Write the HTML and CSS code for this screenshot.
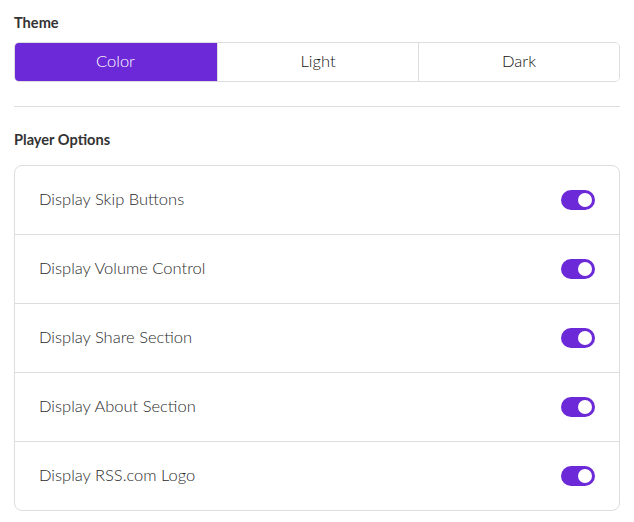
FILE: index.html
```html
<!DOCTYPE html>
<html>
<head>
<meta charset="utf-8">
<link rel="stylesheet" href="styles.css">
</head>
<body>
<div class="panel">
  <div class="section-label">Theme</div>
  <div class="segmented">
    <button class="seg active">Color</button>
    <button class="seg">Light</button>
    <button class="seg">Dark</button>
  </div>
  <hr class="divider">
  <div class="section-label">Player Options</div>
  <div class="options">
    <div class="option"><span class="label">Display Skip Buttons</span><span class="toggle"></span></div>
    <div class="option"><span class="label">Display Volume Control</span><span class="toggle"></span></div>
    <div class="option"><span class="label">Display Share Section</span><span class="toggle"></span></div>
    <div class="option"><span class="label">Display About Section</span><span class="toggle"></span></div>
    <div class="option"><span class="label">Display RSS.com Logo</span><span class="toggle"></span></div>
  </div>
</div>
</body>
</html>
```
FILE: styles.css
```css
* { box-sizing: border-box; }
body {
  margin: 0;
  background: #fff;
  font-family: Lato, "Open Sans", sans-serif;
  color: #444;
}
.panel {
  padding: 14px 14px 0 14px;
}
.section-label {
  font-size: 14.6px;
  font-weight: 700;
  color: #333;
  line-height: 18px;
}
.segmented {
  display: flex;
  margin-top: 10px;
  height: 40px;
  border: 1px solid #ddd;
  border-radius: 5px;
  overflow: hidden;
}
.seg {
  flex: 1;
  border: none;
  background: #fff;
  font-family: inherit;
  font-size: 16.5px;
  font-weight: 300;
  color: #111;
  padding: 0 0 3px 0;
  margin: 0;
}
.seg + .seg { border-left: 1px solid #ddd; }
.seg.active {
  background: #6c29d7;
  color: #fff;
  margin: -1px 0 -1px -1px;
  flex: 0 0 203px;
}
.divider {
  border: none;
  border-top: 1px solid #ddd;
  margin: 24px 0 24px 0;
}
.options {
  margin-top: 16px;
  border: 1px solid #ddd;
  border-radius: 8px;
}
.option {
  display: flex;
  align-items: center;
  justify-content: space-between;
  height: 69px;
  padding: 0 24px;
  font-size: 16.5px;
  font-weight: 300;
  color: #2b2b2b;
}
.label { padding-bottom: 3px; }
.option + .option { border-top: 1px solid #ddd; }
.option:first-child { height: 68px; }
.toggle {
  position: relative;
  width: 34px;
  height: 20px;
  border-radius: 10px;
  background: #6c29d7;
}
.toggle::after {
  content: "";
  position: absolute;
  right: 3px;
  top: 3px;
  width: 14px;
  height: 14px;
  border-radius: 50%;
  background: #fff;
}
```
